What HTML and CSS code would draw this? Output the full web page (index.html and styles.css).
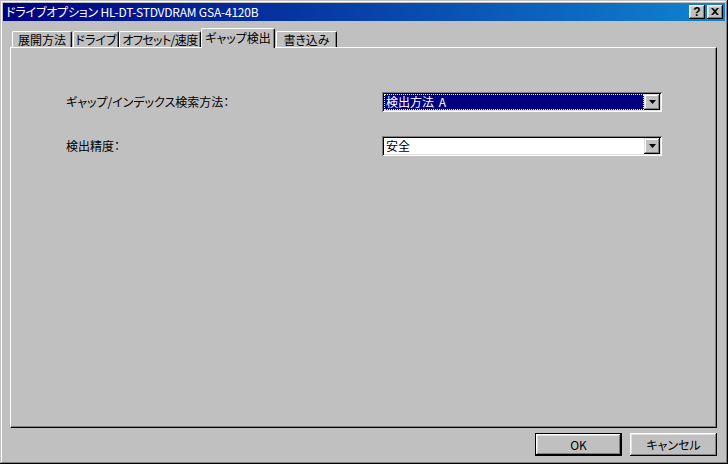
FILE: index.html
```html
<!DOCTYPE html>
<html lang="ja">
<head>
<meta charset="utf-8">
<title>ドライブオプション</title>
<link rel="stylesheet" href="styles.css">
</head>
<body>
<div class="window">
  <div class="titlebar">
    <span class="title">ドライブオプション HL-DT-STDVDRAM GSA-4120B</span>
    <div class="tbtns">
      <span class="tbtn help">?</span>
      <span class="tbtn close">
        <svg width="8" height="7" viewBox="0 0 8 7"><path d="M0 0h2l2 2 2-2h2L5 3.5 8 7H6L4 5 2 7H0l3-3.5z" fill="#000"/></svg>
      </span>
    </div>
  </div>
  <div class="tabs">
    <div class="tab t1">展開方法</div>
    <div class="tab t2">ドライブ</div>
    <div class="tab t3">オフセット/速度</div>
    <div class="tab t4 selected">ギャップ検出</div>
    <div class="tab t5">書き込み</div>
  </div>
  <div class="panel">
    <div class="form">
      <div class="label">ギャップ/インデックス検索方法：</div>
      <div class="combo">
        <div class="value focused"><span>検出方法 A</span></div>
        <div class="dropbtn"><svg width="7" height="4" viewBox="0 0 7 4"><path d="M0 0h7L3.5 4z" fill="#000"/></svg></div>
      </div>
      <div class="label">検出精度：</div>
      <div class="combo">
        <div class="value"><span>安全</span></div>
        <div class="dropbtn"><svg width="7" height="4" viewBox="0 0 7 4"><path d="M0 0h7L3.5 4z" fill="#000"/></svg></div>
      </div>
    </div>
  </div>
  <div class="buttons">
    <div class="btn default">OK</div>
    <div class="btn">キャンセル</div>
  </div>
</div>
</body>
</html>
```

FILE: styles.css
```css
* { box-sizing: border-box; }
html, body {
  margin: 0;
  padding: 0;
  background: #c0c0c0;
}
body {
  font-family: "Noto Sans CJK JP", "Noto Sans", sans-serif;
  font-size: 12px;
  font-feature-settings: "palt";
  color: #000;
}
.window {
  width: 728px;
  height: 464px;
  padding: 3px;
  background: #c0c0c0;
  box-shadow: inset -1px -1px 0 #000, inset 1px 1px 0 #c0c0c0,
              inset -2px -2px 0 #808080, inset 2px 2px 0 #fff;
  display: flex;
  flex-direction: column;
}
.titlebar {
  height: 18px;
  background: linear-gradient(to right, #000080, #1084d0);
  display: flex;
  align-items: center;
  justify-content: space-between;
  padding: 0 2px 0 3px;
}
.title {
  color: #fff;
  font-size: 12px;
  line-height: 18px;
  white-space: nowrap;
  letter-spacing: -0.2px;
}
.tbtns {
  display: flex;
  gap: 2px;
}
.tbtn {
  width: 16px;
  height: 14px;
  background: #c0c0c0;
  box-shadow: inset -1px -1px 0 #000, inset 1px 1px 0 #fff,
              inset -2px -2px 0 #808080, inset 2px 2px 0 #dfdfdf;
  display: flex;
  align-items: center;
  justify-content: center;
}
.help {
  font-family: "Liberation Sans", sans-serif;
  font-weight: bold;
  font-size: 12px;
  line-height: 12px;
  padding-bottom: 1px;
}
.close svg { display: block; margin-bottom: 1px; }

.tabs {
  display: flex;
  align-items: flex-end;
  height: 20px;
  margin: 7px 0 0 9px;
  position: relative;
  z-index: 1;
}
.tab {
  height: 16px;
  margin-bottom: 1px;
  padding-top: 1px;
  background: #c0c0c0;
  border-top: 1px solid #fff;
  border-left: 1px solid #fff;
  border-right: 1px solid #000;
  border-radius: 2px 2px 0 0;
  box-shadow: inset -1px 0 0 #808080;
  display: flex;
  justify-content: center;
  line-height: 14px;
  white-space: nowrap;
  flex: none;
}
.t1 { width: 60px; }
.t2 { width: 46px; margin-left: 1px; }
.t3 { width: 82px; letter-spacing: -0.6px; }
.t4 { width: 74px; }
.t5 { width: 61px; margin-left: 1px; }
.tab.selected {
  height: 20px;
  margin-bottom: 0;
  padding-top: 1px;
  line-height: 16px;
}

.panel {
  margin: -1px 0 0 7px;
  width: 707px;
  height: 381px;
  background: #c0c0c0;
  border-top: 1px solid #fff;
  border-left: 1px solid #fff;
  border-right: 1px solid #000;
  border-bottom: 1px solid #000;
  box-shadow: inset -1px -1px 0 #808080;
}
.form {
  display: grid;
  grid-template-columns: 316px 280px;
  row-gap: 24px;
  align-items: center;
  padding: 44px 0 0 55px;
}
.label {
  white-space: nowrap;
  line-height: 16px;
  padding-bottom: 1px;
}
.combo {
  height: 20px;
  padding: 2px;
  background: #fff;
  box-shadow: inset 1px 1px 0 #808080, inset -1px -1px 0 #fff,
              inset 2px 2px 0 #000, inset -2px -2px 0 #dfdfdf;
  display: flex;
}
.value {
  flex: 1;
  padding-left: 2px;
  line-height: 16px;
  white-space: nowrap;
  word-spacing: 2px;
}
.value.focused {
  background: #000080;
  color: #fff;
  outline: 1px dotted #ffff80;
  outline-offset: -1px;
}
.dropbtn {
  width: 16px;
  flex: none;
  background: #c0c0c0;
  box-shadow: inset -1px -1px 0 #000, inset 1px 1px 0 #dfdfdf,
              inset -2px -2px 0 #808080, inset 2px 2px 0 #fff;
  display: flex;
  align-items: center;
  justify-content: center;
}
.dropbtn svg { display: block; }

.buttons {
  display: flex;
  justify-content: flex-end;
  gap: 8px;
  margin: 5px 8px 0 0;
}
.btn {
  width: 87px;
  height: 23px;
  background: #c0c0c0;
  box-shadow: inset -1px -1px 0 #000, inset 1px 1px 0 #fff,
              inset -2px -2px 0 #808080, inset 2px 2px 0 #dfdfdf;
  display: flex;
  align-items: center;
  justify-content: center;
  line-height: 16px;
}
.btn.default {
  border: 1px solid #000;
}
```
